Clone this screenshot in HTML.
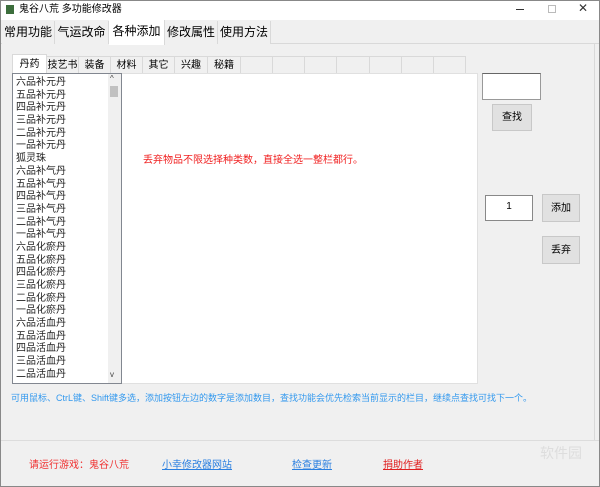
<!DOCTYPE html>
<html><head><meta charset="utf-8"><style>
*{margin:0;padding:0;box-sizing:border-box}
body{width:600px;height:487px;background:#f0f0f0;font-family:"Liberation Sans","Noto Sans CJK SC",sans-serif;position:relative;overflow:hidden;font-size:11px;color:#000}
.abs{position:absolute}
.win{left:0;top:0;width:600px;height:487px;border:1px solid #888;}
.title{left:0;top:0;width:600px;height:20px;background:#fff}
.tab{position:absolute;top:21px;height:23px;font-size:12px;line-height:23px;text-align:center;background:#f0f0f0;border-right:1px solid #d9d9d9}
.st{position:absolute;top:56px;height:17px;font-size:10px;line-height:17px;text-align:center;border:1px solid #d9d9d9;border-bottom:none;border-left:none;background:#f0f0f0}
.list{left:12px;top:73px;width:110px;height:311px;background:#fff;border:1px solid #828790;overflow:hidden;padding-top:3px}
.list div{height:12.7px;line-height:12.7px;font-size:10px;padding-left:3px;color:#222}
.btn{position:absolute;background:#e1e1e1;border:1px solid #c8c8c8;font-size:10px;text-align:center}
.link{text-decoration:underline;position:absolute;top:456px;font-size:10px}
</style></head><body>
<div class="abs title"></div>
<div class="abs" style="left:6px;top:5px;width:8px;height:9px;background:#3c6e3c"></div>
<div class="abs" style="left:19px;top:3px;font-size:10px;line-height:14px">鬼谷八荒 多功能修改器</div>
<div class="abs" style="left:516px;top:9px;width:8px;height:1px;background:#333"></div>
<div class="abs" style="left:548px;top:5px;width:8px;height:8px;border:1px solid #bbb"></div>
<div class="abs" style="left:578px;top:1px;font-size:12px;color:#333">✕</div>
<div class="abs" style="left:0;top:20px;width:600px;height:24px;background:#f0f0f0;border-bottom:1px solid #d9d9d9"></div>
<div class="tab" style="left:2px;width:53px">常用功能</div>
<div class="tab" style="left:55px;width:54px">气运改命</div>
<div class="tab" style="left:109px;width:56px;background:#fff;top:20px;height:25px">各种添加</div>
<div class="tab" style="left:165px;width:53px">修改属性</div>
<div class="tab" style="left:218px;width:53px">使用方法</div>
<div class="abs" style="left:594px;top:44px;width:1px;height:396px;background:#d9d9d9"></div>
<div class="st" style="left:12px;width:35px;background:#fff;top:54px;height:20px;border-left:1px solid #d9d9d9;line-height:19px">丹药</div>
<div class="st" style="left:47px;width:32px">技艺书</div>
<div class="st" style="left:79px;width:32px">装备</div>
<div class="st" style="left:111px;width:32px">材料</div>
<div class="st" style="left:143px;width:32px">其它</div>
<div class="st" style="left:175px;width:33px">兴趣</div>
<div class="st" style="left:208px;width:33px">秘籍</div>
<div class="st" style="left:241px;width:32px"></div>
<div class="st" style="left:273px;width:32px"></div>
<div class="st" style="left:305px;width:32px"></div>
<div class="st" style="left:337px;width:33px"></div>
<div class="st" style="left:370px;width:32px"></div>
<div class="st" style="left:402px;width:32px"></div>
<div class="st" style="left:434px;width:32px"></div>
<div class="abs" style="left:121px;top:73px;width:357px;height:311px;background:#fff;border:1px solid #e0e0e0"></div>
<div class="abs list"><div>六品补元丹</div><div>五品补元丹</div><div>四品补元丹</div><div>三品补元丹</div><div>二品补元丹</div><div>一品补元丹</div><div>狐灵珠</div><div>六品补气丹</div><div>五品补气丹</div><div>四品补气丹</div><div>三品补气丹</div><div>二品补气丹</div><div>一品补气丹</div><div>六品化瘀丹</div><div>五品化瘀丹</div><div>四品化瘀丹</div><div>三品化瘀丹</div><div>二品化瘀丹</div><div>一品化瘀丹</div><div>六品活血丹</div><div>五品活血丹</div><div>四品活血丹</div><div>三品活血丹</div><div>二品活血丹</div></div>
<div class="abs" style="left:108px;top:74px;width:13px;height:309px;background:#f0f0f0"></div>
<div class="abs" style="left:110px;top:86px;width:8px;height:11px;background:#c1c1c1"></div>
<div class="abs" style="left:110px;top:74px;font-size:8px;color:#444">^</div>
<div class="abs" style="left:110px;top:370px;font-size:8px;color:#444">v</div>
<div class="abs" style="left:143px;top:151px;font-size:10px;color:#f02020">丢弃物品不限选择种类数，直接全选一整栏都行。</div>
<div class="abs" style="left:482px;top:73px;width:59px;height:27px;background:#fff;border:1px solid #999;border-top-color:#666"></div>
<div class="btn" style="left:492px;top:104px;width:40px;height:27px;line-height:26px">查找</div>
<div class="abs" style="left:485px;top:195px;width:48px;height:26px;background:#fff;border:1px solid #888;text-align:center;font-size:10px;line-height:22px">1</div>
<div class="btn" style="left:542px;top:194px;width:38px;height:28px;line-height:27px">添加</div>
<div class="btn" style="left:542px;top:236px;width:38px;height:28px;line-height:27px">丢弃</div>
<div class="abs" style="left:11px;top:391px;font-size:9px;color:#3399ee;white-space:nowrap">可用鼠标、CtrL键、Shift键多选，添加按钮左边的数字是添加数目，查找功能会优先检索当前显示的栏目，继续点查找可找下一个。</div>
<div class="abs" style="left:0;top:440px;width:600px;height:1px;background:#dcdcdc"></div>
<div class="abs" style="left:29px;top:456px;font-size:10px;color:#f03030">请运行游戏：鬼谷八荒</div>
<div class="link" style="left:162px;color:#2a7fe0">小幸修改器网站</div>
<div class="link" style="left:292px;color:#2a7fe0">检查更新</div>
<div class="link" style="left:383px;color:#e02020">捐助作者</div>
<div class="abs" style="left:540px;top:443px;font-size:14px;color:#ddd">软件园</div>
<div class="abs win"></div>
</body></html>
